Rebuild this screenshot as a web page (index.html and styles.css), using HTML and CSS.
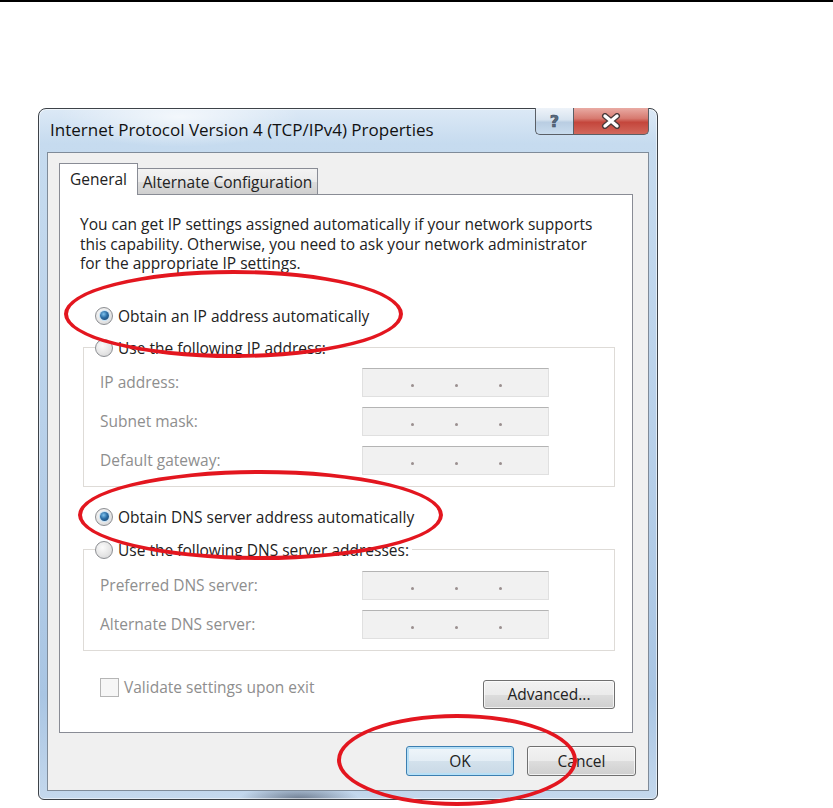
FILE: index.html
```html
<!DOCTYPE html>
<html>
<head>
  <title>Internet Protocol Version 4 (TCP/IPv4) Properties</title>
  <link rel="stylesheet" href="styles.css">
</head>
<body>
  <div class="page-rule"></div>

  <div class="window">
    <div class="titlebar">
      <span class="title">Internet Protocol Version 4 (TCP/IPv4) Properties</span>
      <div class="caption-buttons">
        <div class="cap-btn cap-help"><span>?</span></div>
        <div class="cap-btn cap-close">
          <svg width="22" height="16" viewBox="0 0 22 16">
            <path d="M5 3 L17 13 M17 3 L5 13" stroke="#4a3a3a" stroke-width="6" stroke-linecap="round" />
            <path d="M5 3 L17 13 M17 3 L5 13" stroke="#fff" stroke-width="3.4" stroke-linecap="round" />
          </svg>
        </div>
      </div>
    </div>

    <div class="client">
      <div class="tabs">
        <div class="tab tab-active">General</div>
        <div class="tab tab-alt">Alternate Configuration</div>
      </div>

      <div class="panel">
        <p class="desc">You can get IP settings assigned automatically if your network supports<br>this capability. Otherwise, you need to ask your network administrator<br>for the appropriate IP settings.</p>

        <div class="option option-first"><span class="radio checked"></span>Obtain an IP address automatically</div>

        <fieldset class="group">
          <legend class="option"><span class="radio"></span>Use the following IP address:</legend>
          <div class="field"><span class="field-label">IP address:</span><span class="ip-box"><i></i><i></i><i></i></span></div>
          <div class="field"><span class="field-label">Subnet mask:</span><span class="ip-box"><i></i><i></i><i></i></span></div>
          <div class="field"><span class="field-label">Default gateway:</span><span class="ip-box"><i></i><i></i><i></i></span></div>
        </fieldset>

        <div class="option option-dns"><span class="radio checked"></span>Obtain DNS server address automatically</div>

        <fieldset class="group group-dns">
          <legend class="option"><span class="radio"></span>Use the following DNS server addresses:</legend>
          <div class="field"><span class="field-label">Preferred DNS server:</span><span class="ip-box"><i></i><i></i><i></i></span></div>
          <div class="field"><span class="field-label">Alternate DNS server:</span><span class="ip-box"><i></i><i></i><i></i></span></div>
        </fieldset>

        <div class="footer-row">
          <div class="check"><span class="checkbox"></span>Validate settings upon exit</div>
          <button class="btn btn-advanced">Advanced...</button>
        </div>
      </div>

      <div class="dialog-buttons">
        <button class="btn btn-ok">OK</button>
        <button class="btn btn-cancel">Cancel</button>
      </div>
    </div>
  </div>

  <!-- red annotation marks drawn over the screenshot -->
  <div class="mark mark-ip"></div>
  <div class="mark mark-dns"></div>
  <div class="mark mark-ok"></div>
</body>
</html>
```

FILE: styles.css
```css
body {
  margin: 0;
  background: #fff;
  font-family: "Open Sans", "Noto Sans", sans-serif;
  font-size: 15.5px;
  color: #222;
  position: relative;
  height: 808px;
  overflow: hidden;
}
.page-rule {
  height: 2px;
  background: #000;
}

/* window frame */
.window {
  margin: 106px 0 0 38px;
  width: 620px;
  height: 692px;
  box-sizing: border-box;
  border: 1px solid #3d4248;
  border-radius: 8px 8px 6px 6px;
  padding: 0 8px 8px 8px;
  display: flex;
  flex-direction: column;
  background:
    radial-gradient(ellipse 120px 30px at 140px 8px, rgba(255,255,255,0.7), rgba(255,255,255,0)),
    radial-gradient(ellipse 60px 14px at 260px 690px, rgba(40,50,70,0.55), rgba(40,50,70,0)),
    linear-gradient(180deg, #dce9f6 0%, #c6dbef 5%, #b9d1ea 45%, #a9c5e3 85%, #c4d8ed 100%);
  box-shadow: inset 0 0 0 1px rgba(255,255,255,0.55);
}
.titlebar {
  height: 43px;
  display: flex;
  align-items: flex-start;
}
.title {
  padding: 11px 0 0 3px;
  line-height: 20px;
  font-size: 17px;
  color: #111;
}
.caption-buttons {
  margin: -1px 0 0 auto;
  display: flex;
}
.cap-btn {
  height: 27px;
  box-sizing: border-box;
  border: 1px solid #5a5f66;
  border-top: none;
  display: flex;
  align-items: center;
  justify-content: center;
}
.cap-help {
  width: 38px;
  border-right: none;
  border-radius: 0 0 0 5px;
  background: linear-gradient(180deg, #eef3f9 0%, #d7e3ef 45%, #b9cde2 55%, #c9dcee 100%);
}
.cap-help span {
  font-family: "DejaVu Sans", sans-serif;
  font-weight: bold;
  font-size: 16px;
  color: #5a6c80;
  -webkit-text-stroke: 0.6px #3b4a5c;
}
.cap-close {
  width: 76px;
  border-radius: 0 0 5px 0;
  background: linear-gradient(180deg, #e9aba4 0%, #d77a70 40%, #c4463c 55%, #d2675b 100%);
}

/* client area */
.client {
  flex: 1;
  border: 1px solid #7f8b99;
  background: #f0f0f0;
  padding: 10px 0 0 11px;
}
.tabs {
  display: flex;
  align-items: flex-end;
  height: 31px;
}
.tab {
  box-sizing: border-box;
  border: 1px solid #898c95;
  border-bottom: none;
  text-align: center;
  color: #222;
}
.tab-active {
  width: 79px;
  height: 32px;
  line-height: 31px;
  background: #fff;
  position: relative;
  z-index: 1;
  margin-bottom: -1px;
}
.tab-alt {
  width: 180px;
  height: 26px;
  line-height: 26px;
  border-left: none;
  background: linear-gradient(180deg, #f3f3f3 0%, #ebebeb 50%, #dddddd 51%, #cfcfcf 100%);
}
.panel {
  width: 574px;
  height: 539px;
  box-sizing: border-box;
  border: 1px solid #898c95;
  background: #fff;
  padding: 0 0 0 20px;
}
.desc {
  margin: 0;
  padding-top: 20px;
  line-height: 19.5px;
}

/* radio options */
.option {
  display: flex;
  align-items: center;
  gap: 5px;
  height: 20px;
  color: #222;
}
.option-first {
  margin: 32px 0 0 15px;
}
.option-dns {
  margin: 20px 0 0 15px;
}
.radio {
  width: 18px;
  height: 18px;
  box-sizing: border-box;
  border-radius: 50%;
  border: 1px solid #8c8e92;
  background: radial-gradient(circle at 40% 35%, #fbfbfb 0%, #e6e6e6 55%, #cfd0d2 100%);
  display: flex;
  align-items: center;
  justify-content: center;
}
.radio.checked::after {
  content: "";
  width: 9px;
  height: 9px;
  border-radius: 50%;
  background: radial-gradient(circle at 40% 35%, #7fc3ee 0%, #2b6ea6 45%, #163e66 100%);
  box-shadow: 0 0 0 1px #c6e2f5;
}

/* group boxes */
.group {
  margin: 12px 0 0 3px;
  width: 532px;
  box-sizing: border-box;
  border: 1px solid #dedbd7;
  padding: 0 0 11px 16px;
  display: flex;
  flex-direction: column;
  gap: 10px;
}
.group legend {
  margin-left: -5px;
  padding: 0 3px 0 0;
}
.group .field:first-of-type {
  margin-top: 10px;
}
.group-dns {
  margin-top: 13px;
}
.group-dns .field:first-of-type {
  margin-top: 11px;
}
.field {
  display: flex;
  align-items: center;
}
.field-label {
  width: 262px;
  color: #8e8e8e;
}
.ip-box {
  width: 187px;
  height: 29px;
  box-sizing: border-box;
  border: 1px solid #e0e0e0;
  border-top-color: #b4b4b4;
  background: #f1f1f1;
  display: flex;
  align-items: flex-end;
  gap: 41px;
  padding: 0 0 9px 48px;
}
.ip-box i {
  width: 3px;
  height: 3px;
  border-radius: 50%;
  background: #9a8f8f;
}

/* footer */
.footer-row {
  margin: 27px 17px 0 20px;
  display: flex;
  justify-content: space-between;
  align-items: flex-start;
}
.check {
  display: flex;
  align-items: center;
  gap: 5px;
  height: 19px;
  color: #8e8e8e;
}
.checkbox {
  width: 19px;
  height: 19px;
  box-sizing: border-box;
  border: 1px solid #b5b5b5;
  background: #f6f6f6;
}
.btn {
  font-family: inherit;
  font-size: 15.5px;
  color: #222;
  height: 30px;
  padding: 0;
  box-sizing: border-box;
  border: 1px solid #707070;
  border-radius: 3px;
  background: linear-gradient(180deg, #f2f2f2 0%, #ebebeb 50%, #dddddd 51%, #cfcfcf 100%);
  box-shadow: inset 0 0 0 1px rgba(255,255,255,0.7);
}
.btn-advanced {
  width: 132px;
  height: 29px;
  margin-top: 2px;
}
.dialog-buttons {
  margin-top: 13px;
  display: flex;
  justify-content: flex-end;
  gap: 13px;
  padding-right: 12px;
}
.btn-ok {
  width: 108px;
  border-color: #3c7fb1;
  background: linear-gradient(180deg, #f0f6fa 0%, #e3edf5 50%, #d3e1ec 51%, #c9d9e6 100%);
  box-shadow: inset 0 0 0 2px #b8e0f6;
}
.btn-cancel {
  width: 109px;
}

/* red annotation ellipses */
.mark {
  position: absolute;
  box-sizing: border-box;
  border: 4px solid #e3161f;
  border-radius: 50%;
}
.mark-ip {
  left: 64px;
  top: 270px;
  width: 339px;
  height: 88px;
}
.mark-dns {
  left: 78px;
  top: 470px;
  width: 365px;
  height: 90px;
}
.mark-ok {
  left: 337px;
  top: 714px;
  width: 240px;
  height: 92px;
}
```
